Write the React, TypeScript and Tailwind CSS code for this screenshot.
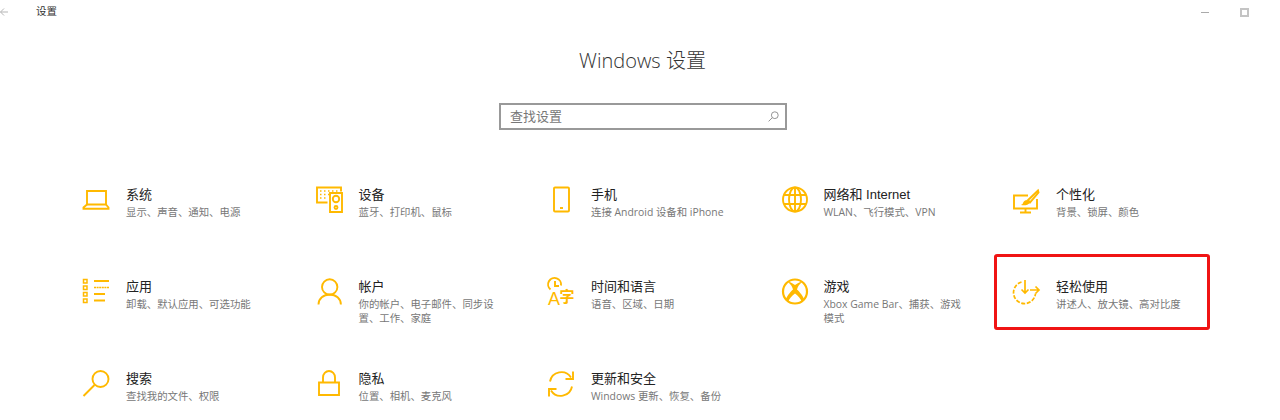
const latinCjk = "font-['Open_Sans','Noto_Sans_CJK_SC',sans-serif]";
const arialCjk = "font-['Liberation_Sans','Noto_Sans_CJK_SC',sans-serif]";

const iconProps = {
  width: 28,
  height: 28,
  viewBox: "0 0 28 28",
  fill: "none",
  stroke: "#ffb900",
  strokeWidth: 1.9,
  className: "overflow-visible",
};

function Laptop() {
  return (
    <svg {...iconProps}>
      <path d="M5 5h19v13.500H5z" />
      <path d="M5 18.500 1.500 21.500v1.200h25v-1.200L24 18.500" />
    </svg>
  );
}

function Devices() {
  return (
    <svg {...iconProps}>
      <path d="M12.500 16.500H2V1.500h24V5.500" />
      <path d="M5 5h2M9 5h2M13 5h2M17 5h2M21 5h2M5 8.500h2M9 8.500h2M13 8.500h2M5 12h2M9 12h2" strokeWidth={1.5} strokeDasharray="1.500 .7" />
      <path d="M15 7h12v19H15z" />
      <circle cx="21" cy="13" r="3.200" />
      <circle cx="21" cy="21.500" r="1.500" />
    </svg>
  );
}

function Phone() {
  return (
    <svg {...iconProps}>
      <rect x="7" y="1.500" width="15" height="24" rx="1" />
      <path d="M13 22h3" />
    </svg>
  );
}

function Globe() {
  return (
    <svg {...iconProps}>
      <circle cx="15" cy="13.500" r="12" />
      <ellipse cx="15" cy="13.500" rx="6" ry="12" />
      <path d="M15 1.500v24M4 9h22M4 18h22" />
    </svg>
  );
}

function Personalize() {
  return (
    <svg {...iconProps}>
      <path d="M16 9.500H2v13h23V13" />
      <path d="M8 26.500h11M13.500 22.500v4" />
      <path d="M26 4.500 16 14l2 2.500 8.500-10z" fill="#ffb900" fillOpacity={0.25} />
      <path d="M15.500 14c-3 0-4 1.500-4.500 3-.3 1-1 1.500-2 2 3 .8 7.500.2 9-2.500z" fill="#ffb900" stroke="none" />
    </svg>
  );
}

function Apps() {
  return (
    <svg {...iconProps}>
      <path d="M1.500 1.500h3.500v3.500H1.500zM1.500 8h3.500v3.500H1.500zM1.500 14.500h3.500v3.500H1.500zM1.500 21h3.500v3.500H1.500z" strokeWidth={1.500} />
      <path d="M12 3h15M12 16h11M12 22.500h11" />
      <path d="M12 9.500h15" strokeWidth={1.500} strokeDasharray="2 .6" />
    </svg>
  );
}

function Person() {
  return (
    <svg {...iconProps}>
      <circle cx="14.700" cy="9" r="7.700" />
      <path d="M3.500 26.500c0-6 5-10 11.200-10s11.200 4 11.200 10" />
    </svg>
  );
}

function TimeLang() {
  return (
    <svg {...iconProps}>
      <path d="M3.500 11.500a6.500 6.500 0 1 1 10.500-4" />
      <path d="M8 3v5h4" />
      <text x="1" y="27" fontSize="18" fill="#ffb900" stroke="none" fontFamily="Liberation Sans, sans-serif">A</text>
      <text x="12.500" y="23.500" fontSize="15" fontWeight="700" fill="#ffb900" stroke="none" fontFamily="Noto Sans CJK SC, sans-serif">字</text>
    </svg>
  );
}

function Xbox() {
  return (
    <svg {...iconProps}>
      <circle cx="15" cy="13.500" r="12" strokeWidth={2.200} />
      <path d="M15 7C12.500 5 10 3.500 8 4c3 2.500 4.500 5 5 7.500-3 2.500-6.500 7.500-7.500 10.500L8 24c1.500-3.500 4-6.500 7-8.500 3 2 5.500 5 7 8.500l2.500-2c-1-3-4.500-8-7.500-10.500.5-2.500 2-5 5-7.500-2-.5-4.500 1-7 3z" fill="#ffb900" stroke="none" />
    </svg>
  );
}

function Access() {
  return (
    <svg {...iconProps}>
      <path d="M9.500 4A11 11 0 1 0 23.500 15.500" strokeDasharray="4 1.600" strokeWidth={1.700} />
      <path d="M13 2v13M9.500 11.500 13 15l3.500-3.500M18 12h9M23.500 8.500 27 12l-3.500 3.500" strokeWidth={1.700} />
    </svg>
  );
}

function Search() {
  return (
    <svg {...iconProps}>
      <circle cx="18.500" cy="9" r="8" />
      <path d="M12.500 15 1.500 26" />
    </svg>
  );
}

function Lock() {
  return (
    <svg {...iconProps}>
      <path d="M8 12V7.500a6 6.500 0 0 1 12 0V12" />
      <path d="M4 12.500h20v12.500H4z" />
    </svg>
  );
}

function Update() {
  return (
    <svg {...iconProps}>
      <path d="M3 11.500A11.500 11.500 0 0 1 24 7.500" />
      <path d="M26 1.500V9h-7.500" />
      <path d="M25 16.500A11.500 11.500 0 0 1 4 20.500" />
      <path d="M2 26.500V19h7.500" />
    </svg>
  );
}

const items = [
  { title: "系统", sub: "显示、声音、通知、电源", Icon: Laptop },
  { title: "设备", sub: "蓝牙、打印机、鼠标", Icon: Devices },
  { title: "手机", sub: "连接 Android 设备和 iPhone", Icon: Phone },
  { title: "网络和 Internet", sub: "WLAN、飞行模式、VPN", Icon: Globe },
  { title: "个性化", sub: "背景、锁屏、颜色", Icon: Personalize },
  { title: "应用", sub: "卸载、默认应用、可选功能", Icon: Apps },
  { title: "帐户", sub: "你的帐户、电子邮件、同步设置、工作、家庭", Icon: Person },
  { title: "时间和语言", sub: "语音、区域、日期", Icon: TimeLang },
  { title: "游戏", sub: "Xbox Game Bar、捕获、游戏模式", Icon: Xbox },
  { title: "轻松使用", sub: "讲述人、放大镜、高对比度", Icon: Access },
  { title: "搜索", sub: "查找我的文件、权限", Icon: Search },
  { title: "隐私", sub: "位置、相机、麦克风", Icon: Lock },
  { title: "更新和安全", sub: "Windows 更新、恢复、备份", Icon: Update },
];

export default function App() {
  return (
    <div className={`relative h-[420px] w-[1280px] overflow-hidden bg-white ${latinCjk}`}>
      <div className="flex h-[24px] items-center justify-between pr-[31px]">
        <div className="flex items-center">
          <svg width="8" height="10" viewBox="0 0 8 10" fill="none" stroke="#b5b5b5" strokeWidth="1">
            <path d="M8 5H0.500M4 1.500 .5 5 4 8.500" />
          </svg>
          <span className="ml-[28px] text-[10.500px] text-[#333]">设置</span>
        </div>
        <div className="flex items-center gap-[31px]">
          <div className="h-px w-[8px] bg-[#aaa]" />
          <div className="h-[9px] w-[9px] border-2 border-[#c4c4c4]" />
        </div>
      </div>

      <h1 className="mt-[22px] pl-[5px] text-center text-[20px] leading-[30px] font-light text-[#333]">Windows 设置</h1>

      <div className="mt-[27px] ml-[499px] flex h-[27px] w-[288px] items-center justify-between border-2 border-[#999] pr-[6px] pl-[9px]">
        <span className="text-[13px] text-[#777]">查找设置</span>
        <svg width="11" height="11" viewBox="0 0 11 11" fill="none" stroke="#888" strokeWidth="0.900">
          <circle cx="6.800" cy="4.200" r="3.400" />
          <path d="M4.300 6.700 .6 10.400" />
        </svg>
      </div>

      <div className="mt-[55px] grid grid-cols-[repeat(5,232.500px)] auto-rows-[92px] pl-[82px]">
        {items.map(({ title, sub, Icon }) => (
          <div key={title} className="flex">
            <div className="w-[44px] shrink-0 pt-[1px]">
              <Icon />
            </div>
            <div className="w-[146px]">
              <div className={`text-[13px] leading-[19px] text-[#222] ${arialCjk}`}>{title}</div>
              <div className="mt-[1px] text-[10.400px] leading-[14px] text-[#777]">{sub}</div>
            </div>
          </div>
        ))}
      </div>

      <div className="absolute top-[254px] left-[994px] h-[76px] w-[216px] rounded-[3px] border-[3px] border-[#f01414]" />
    </div>
  );
}
